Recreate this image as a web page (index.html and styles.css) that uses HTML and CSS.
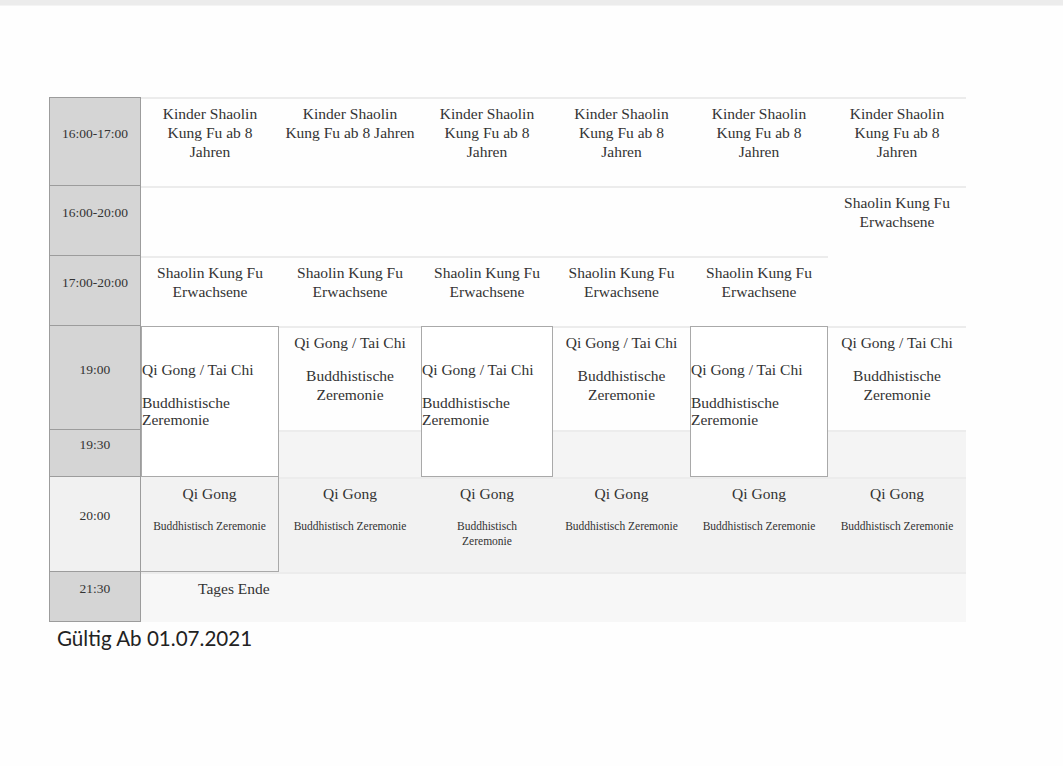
FILE: index.html
```html
<!DOCTYPE html>
<html lang="de">
<head>
<meta charset="utf-8">
<title>Stundenplan</title>
<link rel="stylesheet" href="styles.css">
</head>
<body>
<div class="topbar"></div>
<main class="page">
  <div class="plan">
    <div class="time first">16:00-17:00</div>
    <div class="cell">Kinder Shaolin<br>Kung Fu ab 8<br>Jahren</div>
    <div class="cell">Kinder Shaolin<br>Kung Fu ab 8 Jahren</div>
    <div class="cell">Kinder Shaolin<br>Kung Fu ab 8<br>Jahren</div>
    <div class="cell">Kinder Shaolin<br>Kung Fu ab 8<br>Jahren</div>
    <div class="cell">Kinder Shaolin<br>Kung Fu ab 8<br>Jahren</div>
    <div class="cell">Kinder Shaolin<br>Kung Fu ab 8<br>Jahren</div>

    <div class="time">16:00-20:00</div>
    <div class="cell"></div>
    <div class="cell"></div>
    <div class="cell"></div>
    <div class="cell"></div>
    <div class="cell"></div>
    <div class="cell rows2">Shaolin Kung Fu<br>Erwachsene</div>

    <div class="time">17:00-20:00</div>
    <div class="cell">Shaolin Kung Fu<br>Erwachsene</div>
    <div class="cell">Shaolin Kung Fu<br>Erwachsene</div>
    <div class="cell">Shaolin Kung Fu<br>Erwachsene</div>
    <div class="cell">Shaolin Kung Fu<br>Erwachsene</div>
    <div class="cell">Shaolin Kung Fu<br>Erwachsene</div>

    <div class="time">19:00</div>
    <div class="box rows2"><p class="box-title">Qi Gong / Tai Chi</p><p class="box-sub">Buddhistische<br>Zeremonie</p></div>
    <div class="cell"><p class="qi">Qi Gong / Tai Chi</p><p class="qi-sub">Buddhistische<br>Zeremonie</p></div>
    <div class="box rows2"><p class="box-title">Qi Gong / Tai Chi</p><p class="box-sub">Buddhistische<br>Zeremonie</p></div>
    <div class="cell"><p class="qi">Qi Gong / Tai Chi</p><p class="qi-sub">Buddhistische<br>Zeremonie</p></div>
    <div class="box rows2"><p class="box-title">Qi Gong / Tai Chi</p><p class="box-sub">Buddhistische<br>Zeremonie</p></div>
    <div class="cell"><p class="qi">Qi Gong / Tai Chi</p><p class="qi-sub">Buddhistische<br>Zeremonie</p></div>

    <div class="time">19:30</div>
    <div class="cell grey"></div>
    <div class="cell grey"></div>
    <div class="cell grey"></div>

    <div class="time light">20:00</div>
    <div class="cell eve framed"><p class="qg">Qi Gong</p><p class="small">Buddhistisch Zeremonie</p></div>
    <div class="cell eve"><p class="qg">Qi Gong</p><p class="small">Buddhistisch Zeremonie</p></div>
    <div class="cell eve"><p class="qg">Qi Gong</p><p class="small">Buddhistisch<br>Zeremonie</p></div>
    <div class="cell eve"><p class="qg">Qi Gong</p><p class="small">Buddhistisch Zeremonie</p></div>
    <div class="cell eve"><p class="qg">Qi Gong</p><p class="small">Buddhistisch Zeremonie</p></div>
    <div class="cell eve"><p class="qg">Qi Gong</p><p class="small">Buddhistisch Zeremonie</p></div>

    <div class="time">21:30</div>
    <div class="cell end">Tages Ende</div>
  </div>
  <p class="valid">Gültig Ab 01.07.2021</p>
</main>
</body>
</html>
```

FILE: styles.css
```css
html, body {
  margin: 0;
  padding: 0;
  background: #fefefe;
}

.topbar {
  height: 5px;
  background: #ececec;
  border-bottom: 1px solid #f4f4f4;
}

.page {
  padding: 91px 0 0 49px;
}

.plan {
  display: grid;
  grid-template-columns: 92px 138px 142px 132px 137px 138px 138px;
  grid-template-rows: 89px 70px 70px 104px 47px 95px 50px;
  width: 917px;
  font-family: "Liberation Serif", "Times New Roman", serif;
  color: #333;
}

.time {
  box-sizing: border-box;
  background: #d5d5d5;
  border-left: 1px solid #9c9c9c;
  border-right: 1px solid #9c9c9c;
  border-bottom: 1px solid #9c9c9c;
  font-size: 13.5px;
  display: flex;
  align-items: center;
  justify-content: center;
  padding-bottom: 16px;
}

.time.first {
  border-top: 1px solid #9c9c9c;
}

.time.light {
  background: #f1f1f1;
}

.cell {
  box-sizing: border-box;
  border-top: 2px solid #ececec;
  padding: 5px 2px 0;
  font-size: 15.5px;
  line-height: 19px;
  text-align: center;
}

.cell p, .box p {
  margin: 0;
}

.rows2 {
  grid-row: span 2;
}

.qi {
  line-height: 19px;
}

.qi-sub {
  margin-top: 14px !important;
  line-height: 19px;
}

.box {
  box-sizing: border-box;
  border: 1px solid #a9a9a9;
  background: #fff;
  padding: 33px 0 0 0;
  font-size: 15.5px;
  text-align: left;
}

.box-title {
  line-height: 19px;
}

.box-sub {
  margin-top: 15px !important;
  line-height: 17px;
}

.grey {
  background: #f4f4f4;
}

.eve {
  background: #f2f2f2;
}

.framed {
  border-right: 1px solid #a9a9a9;
  border-bottom: 1px solid #a9a9a9;
  border-top: none;
  padding-top: 7px;
}

.small {
  margin-top: 16px !important;
  font-size: 11.5px;
  line-height: 15px;
}

.end {
  grid-column: span 6;
  background: #f7f7f7;
  text-align: left;
  padding-left: 57px;
}

.valid {
  margin: 4px 0 0 8px;
  font-family: Lato, "Open Sans", sans-serif;
  font-size: 20.6px;
  color: #222;
}
```
